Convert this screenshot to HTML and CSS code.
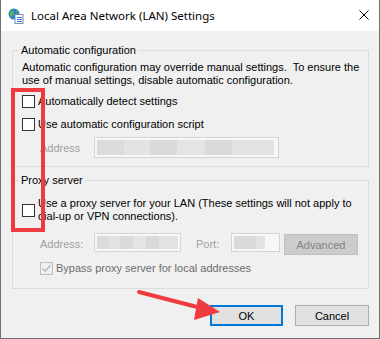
FILE: index.html
```html
<!DOCTYPE html>
<html>
<head>
    <title>Local Area Network (LAN) Settings</title>
    <link rel="stylesheet" href="styles.css">
</head>
<body>
    <div class="window">
        <div class="titlebar">
            <svg class="title-icon" width="16" height="16" viewBox="0 0 16 16">
                <circle cx="6" cy="6" r="5.5" fill="#2f7fd0"/>
                <path d="M2 4 Q4 2 6 3 Q5 5 6 6 Q4 7 3 9 Q1 7 2 4 Z" fill="#5cb848"/>
                <path d="M7 1 Q10 2 10 5 Q8 4 7 1 Z" fill="#5cb848"/>
                <rect x="7" y="6.5" width="8" height="9" fill="#ffffff" stroke="#7a8fa8"/>
                <rect x="9" y="9" width="5" height="1" fill="#3b7bd4"/>
                <rect x="9" y="11" width="5" height="1" fill="#3b7bd4"/>
                <rect x="9" y="13" width="5" height="1" fill="#3b7bd4"/>
            </svg>
            <span class="title-text">Local Area Network (LAN) Settings</span>
            <svg class="close-icon" width="10" height="10" viewBox="0 0 10 10">
                <path d="M0.5 0.5 L9.5 9.5 M9.5 0.5 L0.5 9.5" stroke="#000" stroke-width="1"/>
            </svg>
        </div>

        <div class="client">
            <fieldset class="group group-auto">
                <legend>Automatic configuration</legend>
                <p class="desc">Automatic configuration may override manual settings.&nbsp; To ensure the<br>use of manual settings, disable automatic configuration.</p>
                <label class="check-row row-first">
                    <span class="checkbox"></span>
                    <span>Automatically detect settings</span>
                </label>
                <label class="check-row">
                    <span class="checkbox"></span>
                    <span>Use automatic configuration script</span>
                </label>
                <div class="field-row script-row">
                    <span class="field-label">Address</span>
                    <span class="textbox tb-script"></span>
                </div>
            </fieldset>

            <fieldset class="group group-proxy">
                <legend>Proxy server</legend>
                <label class="check-row proxy-row">
                    <span class="checkbox"></span>
                    <span>Use a proxy server for your LAN (These settings will not apply to<br>dial-up or VPN connections).</span>
                </label>
                <div class="field-row proxy-fields">
                    <span class="field-label">Address:</span>
                    <span class="textbox tb-address"></span>
                    <span class="field-label port-label">Port:</span>
                    <span class="textbox tb-port"></span>
                    <button class="btn btn-disabled">Advanced</button>
                </div>
                <label class="check-row bypass-row">
                    <span class="checkbox checked-disabled">
                        <svg width="11" height="11" viewBox="0 0 11 11">
                            <path d="M1.5 5.5 L4.2 8.2 L9.5 2.2" fill="none" stroke="#bcbcbc" stroke-width="1.6"/>
                        </svg>
                    </span>
                    <span class="disabled-text">Bypass proxy server for local addresses</span>
                </label>
            </fieldset>

            <div class="buttons">
                <button class="btn btn-default">OK</button>
                <button class="btn">Cancel</button>
            </div>
        </div>

        <div class="annotation-box"></div>
        <svg class="annotation-arrow" width="380" height="339" viewBox="0 0 380 339">
            <path d="M139 292 L205 309" stroke="#ef3b3f" stroke-width="4" stroke-linecap="round"/>
            <path d="M220 312 L198 298 L194 320 Z" fill="#ef3b3f"/>
        </svg>
    </div>
</body>
</html>
```

FILE: styles.css
```css
html, body {
    margin: 0;
    padding: 0;
}

body {
    width: 380px;
    height: 339px;
    overflow: hidden;
    font-family: "Liberation Sans", Arial, sans-serif;
    font-size: 11px;
    color: #000;
}

.window {
    position: relative;
    width: 380px;
    height: 339px;
    box-sizing: border-box;
    border: 1px solid #707070;
    border-top: none;
    background: #f0f0f0;
    display: flex;
    flex-direction: column;
}

.titlebar {
    height: 31px;
    background: #fff;
    display: flex;
    align-items: center;
    padding: 0 10px 0 7px;
}

.title-icon {
    margin-top: 1px;
}

.title-text {
    margin-left: 7px;
    flex: 1;
    font-family: "Noto Sans", Arial, sans-serif;
    font-size: 11.5px;
    color: #000;
}

.close-icon {
    margin-top: -1px;
}

.client {
    flex: 1;
    display: flex;
    flex-direction: column;
}

.group {
    border: 1px solid #dcdcdc;
    margin: 11px 10px 0 11px;
    padding: 0 0 0 9px;
    min-width: 0;
}

.group legend {
    margin-left: -3px;
    padding: 0 2px;
    line-height: 16px;
}

.group-auto {
    padding-bottom: 8px;
}

.group-proxy {
    margin-top: 5px;
    padding-bottom: 11px;
}

.desc {
    margin: 3px 0 0 0;
    line-height: 13px;
    white-space: nowrap;
}

.check-row {
    display: flex;
    align-items: center;
    height: 20px;
    margin-top: 3px;
    white-space: nowrap;
}

.row-first {
    margin-top: 4px;
}

.checkbox {
    width: 13px;
    height: 13px;
    box-sizing: border-box;
    border: 1px solid #333;
    background: #fff;
    margin-right: 3px;
    flex-shrink: 0;
    display: flex;
    align-items: center;
    justify-content: center;
}

.checked-disabled {
    border-color: #bcbcbc;
    background: #f0f0f0;
}

.proxy-row {
    height: auto;
    margin-top: 9px;
    line-height: 13px;
}

.bypass-row {
    margin-top: 4px;
    height: 18px;
    padding-left: 18px;
}

.disabled-text {
    color: #6d6d6d;
}

.field-row {
    display: flex;
    align-items: center;
    padding-left: 18px;
}

.script-row {
    margin-top: 3px;
    height: 21px;
}

.field-label {
    color: #a0a0a0;
    width: 54px;
}

.port-label {
    width: 35px;
    margin-left: 15px;
}

.textbox {
    box-sizing: border-box;
    border: 1px solid #d4d4d4;
    box-shadow: inset 0 0 0 2px #f7f7f7;
    background: linear-gradient(90deg, #f7f7f7 0 2px, #dcdcdc 2px 16%, #e3e3e3 16% 30%, #dadada 30% 45%, #e4e4e4 45% 60%, #d9d9d9 60% 75%, #e2e2e2 75% 98%, #f7f7f7 98%);
}

.tb-script {
    width: 185px;
    height: 21px;
}

.proxy-fields {
    margin-top: 10px;
    height: 22px;
}

.tb-address {
    width: 87px;
    height: 19px;
    align-self: flex-start;
}

.tb-port {
    width: 49px;
    height: 19px;
    align-self: flex-start;
    background: linear-gradient(90deg, #f7f7f7 0 2px, #dadada 2px 50%, #e3e3e3 50% 70%, #f7f7f7 70%);
}

.btn {
    font-family: inherit;
    font-size: 11px;
    box-sizing: border-box;
    height: 21px;
    padding: 0;
    background: #e1e1e1;
    border: 1px solid #adadad;
    color: #000;
}

.btn-disabled {
    width: 74px;
    height: 21px;
    margin-left: 4px;
    align-self: flex-end;
    background: #cccccc;
    border-color: #bfbfbf;
    color: #838383;
}

.buttons {
    display: flex;
    justify-content: flex-end;
    gap: 12px;
    margin-top: 16px;
    padding-right: 10px;
}

.buttons .btn {
    width: 74px;
}

.btn-default {
    border: 2px solid #0078d7;
    width: 73px !important;
}

.annotation-box {
    position: absolute;
    left: 10px;
    top: 88px;
    width: 34px;
    height: 144px;
    box-sizing: border-box;
    border: 4px solid #ef3b3f;
}

.annotation-arrow {
    position: absolute;
    left: -1px;
    top: 0;
}
```
